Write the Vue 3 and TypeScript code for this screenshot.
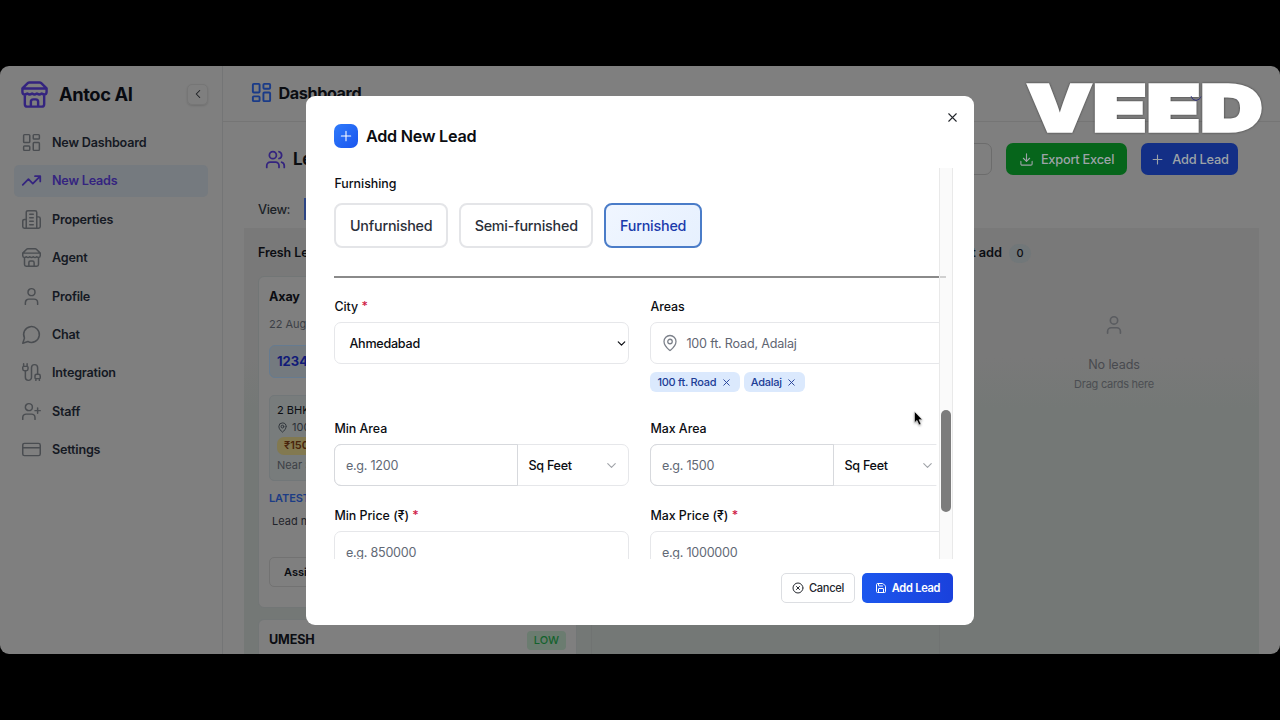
<script setup lang="ts">
import { h } from 'vue'

const shapes: Record<string, string> = {
  dashboard:
    'M4 3h5a1 1 0 0 1 1 1v7a1 1 0 0 1-1 1H4a1 1 0 0 1-1-1V4a1 1 0 0 1 1-1z M15 3h5a1 1 0 0 1 1 1v3a1 1 0 0 1-1 1h-5a1 1 0 0 1-1-1V4a1 1 0 0 1 1-1z M15 12h5a1 1 0 0 1 1 1v7a1 1 0 0 1-1 1h-5a1 1 0 0 1-1-1v-7a1 1 0 0 1 1-1z M4 16h5a1 1 0 0 1 1 1v3a1 1 0 0 1-1 1H4a1 1 0 0 1-1-1v-3a1 1 0 0 1 1-1z',
  trend: 'M22 7l-8.5 8.5-5-5L2 17 M16 7h6v6',
  building:
    'M6 22V4a2 2 0 0 1 2-2h8a2 2 0 0 1 2 2v18Z M6 12H4a2 2 0 0 0-2 2v6a2 2 0 0 0 2 2h2 M18 9h2a2 2 0 0 1 2 2v9a2 2 0 0 1-2 2h-2 M10 6h4 M10 10h4 M10 14h4 M10 18h4',
  store:
    'm2 7 4.41-4.41A2 2 0 0 1 7.83 2h8.34a2 2 0 0 1 1.42.59L22 7 M4 12v8a2 2 0 0 0 2 2h12a2 2 0 0 0 2-2v-8 M15 22v-4a2 2 0 0 0-2-2h-2a2 2 0 0 0-2 2v4 M2 7h20 M22 7v3a2 2 0 0 1-2 2a2.7 2.7 0 0 1-1.59-.63.7.7 0 0 0-.82 0A2.7 2.7 0 0 1 16 12a2.7 2.7 0 0 1-1.59-.63.7.7 0 0 0-.82 0A2.7 2.7 0 0 1 12 12a2.7 2.7 0 0 1-1.59-.63.7.7 0 0 0-.82 0A2.7 2.7 0 0 1 8 12a2.7 2.7 0 0 1-1.59-.63.7.7 0 0 0-.82 0A2.7 2.7 0 0 1 4 12a2 2 0 0 1-2-2V7',
  user: 'M19 21v-2a4 4 0 0 0-4-4H9a4 4 0 0 0-4 4v2 M16 7a4 4 0 1 1-8 0a4 4 0 1 1 8 0',
  chat: 'M7.9 20A9 9 0 1 0 4 16.1L2 22Z',
  cable:
    'M17 19a1 1 0 0 1-1-1v-2a2 2 0 0 1 2-2h2a2 2 0 0 1 2 2v2a1 1 0 0 1-1 1z M17 21v-2 M19 14V6.5a1 1 0 0 0-7 0v11a1 1 0 0 1-7 0V10 M21 21v-2 M3 5V2 M4 10a2 2 0 0 1-2-2V6a1 1 0 0 1 1-1h4a1 1 0 0 1 1 1v2a2 2 0 0 1-2 2z M7 5V2',
  userPlus:
    'M16 21v-2a4 4 0 0 0-4-4H6a4 4 0 0 0-4 4v2 M13 7a4 4 0 1 1-8 0a4 4 0 1 1 8 0 M19 8v6 M22 11h-6',
  card: 'M4 5h16a2 2 0 0 1 2 2v10a2 2 0 0 1-2 2H4a2 2 0 0 1-2-2V7a2 2 0 0 1 2-2z M2 10h20',
  users:
    'M16 21v-2a4 4 0 0 0-4-4H6a4 4 0 0 0-4 4v2 M13 7a4 4 0 1 1-8 0a4 4 0 1 1 8 0 M16 3.13a4 4 0 0 1 0 7.75 M22 21v-2a4 4 0 0 0-3-3.87',
  pin: 'M20 10c0 4.993-5.539 10.193-7.399 11.799a1 1 0 0 1-1.202 0C9.539 20.193 4 14.993 4 10a8 8 0 0 1 16 0 M15 10a3 3 0 1 1-6 0a3 3 0 1 1 6 0',
  download: 'M12 15V3 M21 15v4a2 2 0 0 1-2 2H5a2 2 0 0 1-2-2v-4 M7 10l5 5 5-5',
  plus: 'M5 12h14 M12 5v14',
  close: 'M18 6 6 18 M6 6l12 12',
  circleX: 'M22 12a10 10 0 1 1-20 0a10 10 0 1 1 20 0 M15 9l-6 6 M9 9l6 6',
  save: 'M15.2 3a2 2 0 0 1 1.4.6l3.8 3.8a2 2 0 0 1 .6 1.4V19a2 2 0 0 1-2 2H5a2 2 0 0 1-2-2V5a2 2 0 0 1 2-2z M17 21v-7a1 1 0 0 0-1-1H8a1 1 0 0 0-1 1v7 M7 3v4a1 1 0 0 0 1 1h7',
  left: 'M15 18l-6-6 6-6',
  down: 'M6 9l6 6 6-6',
}

interface IconProps {
  name: string
  size: number
  weight?: number
}

const Icon = (p: IconProps) =>
  h(
    'svg',
    {
      width: p.size,
      height: p.size,
      viewBox: '0 0 24 24',
      fill: 'none',
      stroke: 'currentColor',
      'stroke-width': p.weight ?? 2,
      'stroke-linecap': 'round',
      'stroke-linejoin': 'round',
    },
    [h('path', { d: shapes[p.name] })],
  )
Icon.props = ['name', 'size', 'weight']

const nav = [
  { label: 'New Dashboard', icon: 'dashboard' },
  { label: 'New Leads', icon: 'trend', active: true },
  { label: 'Properties', icon: 'building' },
  { label: 'Agent', icon: 'store' },
  { label: 'Profile', icon: 'user' },
  { label: 'Chat', icon: 'chat' },
  { label: 'Integration', icon: 'cable' },
  { label: 'Staff', icon: 'userPlus' },
  { label: 'Settings', icon: 'card' },
]

const furnishing = ['Unfurnished', 'Semi-furnished', 'Furnished']
const areas = ['100 ft. Road', 'Adalaj']
const sizes = [
  { label: 'Min Area', hint: 'e.g. 1200' },
  { label: 'Max Area', hint: 'e.g. 1500' },
]
const prices = [
  { label: 'Min Price (₹)', hint: 'e.g. 850000' },
  { label: 'Max Price (₹)', hint: 'e.g. 1000000' },
]
</script>

<template>
  <div class="stage">
    <div class="app">
      <aside class="sidebar">
        <div class="brand">
          <Icon class="brand-icon" name="store" :size="29" />
          <span class="brand-name">Antoc AI</span>
          <span class="collapse"><Icon name="left" :size="14" :weight="1.8" /></span>
        </div>
        <nav>
          <a v-for="item in nav" :key="item.label" class="nav-item" :class="{ active: item.active }">
            <Icon :name="item.icon" :size="21" :weight="item.active ? 2 : 1.7" />
            <span>{{ item.label }}</span>
          </a>
        </nav>
      </aside>

      <main class="main">
        <header class="topbar">
          <Icon name="dashboard" :size="23" />
          <span>Dashboard</span>
          <i class="ring"></i>
        </header>
        <div class="toolbar">
          <Icon class="leads-icon" name="users" :size="21" />
          <span class="leads-title">Leads</span>
          <span class="search"></span>
          <span class="btn green"><Icon name="download" :size="15" :weight="1.8" />Export Excel</span>
          <span class="btn blue"><Icon name="plus" :size="15" :weight="1.8" />Add Lead</span>
        </div>
        <div class="view-row"><span>View:</span><i></i></div>
        <div class="board">
          <section class="column">
            <div class="column-head">Fresh Leads</div>
            <article class="lead">
              <div class="lead-name">Axay</div>
              <div class="lead-date">22 Aug</div>
              <div class="phone">12345</div>
              <div class="need">
                <div class="need-type">2 BHK</div>
                <div class="need-place"><Icon name="pin" :size="11" />100</div>
                <div class="need-price">₹150</div>
                <div class="need-near">Near S</div>
              </div>
              <div class="latest">LATEST</div>
              <div class="note">Lead m</div>
              <div class="assign">Assign</div>
            </article>
            <article class="lead next">
              <div class="lead-name">UMESH</div>
              <span class="low">LOW</span>
            </article>
          </section>
          <section class="column"></section>
          <section class="column last">
            <div class="column-head">Not add <b>0</b></div>
            <div class="empty">
              <Icon name="user" :size="22" :weight="1.8" />
              <div class="empty-title">No leads</div>
              <div class="empty-sub">Drag cards here</div>
            </div>
          </section>
        </div>
      </main>
    </div>

    <div class="dialog">
      <div class="dialog-head">
        <span class="badge"><Icon name="plus" :size="16" :weight="1.6" /></span>
        <h2>Add New Lead</h2>
        <Icon class="dismiss" name="close" :size="15" :weight="1.7" />
      </div>

      <div class="scroller">
        <div class="form">
          <div class="label">Furnishing</div>
          <div class="choices">
            <span v-for="f in furnishing" :key="f" class="choice" :class="{ picked: f === 'Furnished' }">{{ f }}</span>
          </div>
          <div class="rule"></div>
          <div class="row places">
            <div>
              <div class="label">City <em>*</em></div>
              <div class="input city"><span>Ahmedabad</span><Icon name="down" :size="13" :weight="2.2" /></div>
            </div>
            <div>
              <div class="label">Areas</div>
              <div class="input area"><Icon name="pin" :size="18" :weight="1.7" /><span>100 ft. Road, Adalaj</span></div>
              <div class="chips">
                <span v-for="a in areas" :key="a" class="chip">{{ a }}<Icon name="close" :size="11" :weight="2" /></span>
              </div>
            </div>
          </div>
          <div class="row sizes">
            <div v-for="s in sizes" :key="s.label">
              <div class="label">{{ s.label }}</div>
              <div class="combo">
                <span class="amount">{{ s.hint }}</span>
                <span class="unit">Sq Feet<Icon name="down" :size="15" :weight="1.8" /></span>
              </div>
            </div>
          </div>
          <div class="row">
            <div v-for="p in prices" :key="p.label">
              <div class="label">{{ p.label }} <em>*</em></div>
              <div class="input price">{{ p.hint }}</div>
            </div>
          </div>
        </div>
        <div class="track"><div class="thumb"></div></div>
      </div>

      <div class="dialog-foot">
        <span class="cancel"><Icon name="circleX" :size="12" />Cancel</span>
        <span class="submit"><Icon name="save" :size="12" />Add Lead</span>
      </div>
    </div>

    <svg class="watermark" width="260" height="74" viewBox="0 0 260 74">
      <text y="61">
        <tspan x="13.5" textLength="64" lengthAdjust="spacingAndGlyphs">V</tspan><tspan x="79.3" textLength="53" lengthAdjust="spacingAndGlyphs">E</tspan><tspan x="133" textLength="53" lengthAdjust="spacingAndGlyphs">E</tspan><tspan x="186.7" textLength="61.5" lengthAdjust="spacingAndGlyphs">D</tspan>
      </text>
      <path d="M177 26q1 4 5 4.5q4-.5 5-4" fill="none" stroke="#26267c" stroke-width=".8" />
    </svg>

    <svg class="cursor" width="12" height="18" viewBox="0 0 12 18">
      <path d="M1.5 1.5v11.2l2.5-2.3 2 4.5 2-.9-2-4.3h3.4z" fill="#000" stroke="#fff" stroke-width=".5" />
    </svg>
  </div>
</template>

<style>
body {
  margin: 0;
  background: #000;
}
</style>

<style scoped>
.stage {
  position: relative;
  box-sizing: border-box;
  width: 1280px;
  height: 720px;
  padding: 66px 0;
  overflow: hidden;
  background: #000;
  font-family: Inter, "Liberation Sans", sans-serif;
  color: #0b0d12;
}
.stage * {
  box-sizing: border-box;
}
svg {
  flex: none;
}
.app {
  display: flex;
  height: 588px;
  overflow: hidden;
  border-radius: 9px;
  background: #7f7f7f;
}
.sidebar {
  width: 223px;
  flex: none;
  border-right: 1px solid #747576;
}
.brand {
  display: flex;
  align-items: center;
  height: 56px;
  padding: 0 14px 0 20px;
}
.brand-icon {
  color: #34247f;
}
.brand-name {
  margin-left: 10px;
  font-size: 18.3px;
  font-weight: 700;
  letter-spacing: -0.4px;
  color: #080a10;
}
.collapse {
  display: grid;
  place-items: center;
  width: 21px;
  height: 21px;
  margin-left: auto;
  border: 1px solid #767676;
  border-radius: 5px;
  box-shadow: 0 1px 2px #0002;
  color: #1c1e22;
}
nav {
  padding: 4.5px 14px 0;
}
.nav-item {
  display: flex;
  align-items: center;
  gap: 10px;
  height: 32.3px;
  margin: 0 0 6.05px;
  padding-left: 7px;
  border-radius: 5px;
  font-size: 12.6px;
  font-weight: 600;
  letter-spacing: -0.2px;
  color: #151923;
}
.nav-item svg {
  color: #4a4d51;
}
.nav-item.active,
.nav-item.active svg {
  color: #34247f;
}
.nav-item.active {
  background: #757a7f;
}
.main {
  flex: 1;
  min-width: 0;
}
.topbar {
  position: relative;
  display: flex;
  align-items: center;
  gap: 6px;
  height: 56px;
  padding: 0 0 1px 26.5px;
  border-bottom: 1px solid #757575;
  font-size: 16.2px;
  font-weight: 700;
  letter-spacing: -0.4px;
}
.topbar svg {
  margin-top: -2px;
  color: #1a3b88;
}
.ring {
  position: absolute;
  width: 11px;
  height: 11px;
  top: 23px;
  left: 1010px;
  border: 1px solid #26267c;
  border-radius: 50%;
}
.toolbar {
  display: flex;
  align-items: center;
  height: 74px;
  padding: 0 42px 0 42px;
}
.leads-icon {
  color: #34247f;
}
.leads-title {
  margin-left: 7px;
  font-size: 17px;
  font-weight: 700;
  letter-spacing: -0.3px;
}
.search {
  width: 120px;
  height: 32px;
  margin: 0 14px 0 auto;
  border: 1px solid #6c6c6c;
  border-radius: 7px;
}
.btn {
  display: flex;
  align-items: center;
  justify-content: center;
  gap: 7px;
  height: 32px;
  border-radius: 7px;
  font-size: 12.8px;
  font-weight: 500;
  letter-spacing: -0.24px;
  color: #9da3a8;
}
.green {
  width: 121px;
  margin-right: 14px;
  background: #06651b;
}
.blue {
  width: 97px;
  background: #132f86;
}
.view-row {
  display: flex;
  align-items: center;
  gap: 14px;
  height: 32px;
  padding: 0 0 6px 35px;
  font-size: 12.8px;
  font-weight: 500;
  letter-spacing: -0.4px;
  color: #1b1f27;
}
.view-row i {
  width: 60px;
  height: 22px;
  background: #2d4585;
}
.board {
  display: flex;
  width: 1015px;
  height: 426px;
  margin-left: 21px;
  overflow: hidden;
  background: linear-gradient(#797979 0 130px, #747876 180px);
}
.column {
  width: 348px;
  flex: none;
  padding: 14px 14px 0;
  border-right: 1px solid #707372;
}
.column.last {
  border: 0;
}
.column-head {
  height: 21px;
  line-height: 21px;
  font-size: 12.5px;
  font-weight: 600;
  letter-spacing: -0.1px;
}
.last .column-head {
  font-size: 12.8px;
}
.column-head b {
  display: inline-block;
  width: 22px;
  height: 19px;
  margin-left: 4px;
  border-radius: 10px;
  line-height: 19px;
  text-align: center;
  font-size: 11px;
  font-weight: 500;
  background: #717779;
}
.lead {
  height: 332px;
  margin-top: 13px;
  padding: 11px 10px 0;
  border: 1px solid #727676;
  border-radius: 6px;
  background: #7f7f7f;
}
.lead-name {
  height: 18px;
  line-height: 18px;
  font-size: 12.6px;
  font-weight: 700;
  letter-spacing: -0.15px;
}
.lead-date {
  margin-top: 9.5px;
  line-height: 16px;
  font-size: 11px;
  color: #3c4046;
}
.phone {
  height: 33px;
  margin-top: 13px;
  padding-left: 7px;
  border: 1px solid #667b90;
  border-radius: 6px;
  background: #747a7f;
  line-height: 31px;
  font-size: 13px;
  font-weight: 700;
  color: #111b78;
}
.need {
  height: 86px;
  margin-top: 17.5px;
  padding: 6px 7px;
  border: 1px solid #727779;
  border-radius: 5px;
  background: #787c7c;
  font-size: 11px;
  line-height: 17px;
}
.need-place {
  display: flex;
  align-items: center;
  gap: 4px;
  color: #2b3037;
}
.need-price {
  height: 18px;
  margin: 1px 0 2px;
  padding-left: 7px;
  border-radius: 7px;
  background: #827950;
  font-weight: 600;
  color: #49240b;
}
.need-near {
  color: #3c4046;
}
.latest {
  margin-top: 8.5px;
  line-height: 16px;
  font-size: 11px;
  font-weight: 600;
  letter-spacing: -0.1px;
  color: #1c3c85;
}
.note {
  margin: 7px 0 0 3px;
  line-height: 16px;
  font-size: 11px;
  color: #1f232a;
}
.assign {
  height: 30px;
  margin-top: 28.5px;
  padding-left: 14px;
  border: 1px solid #727272;
  border-radius: 5px;
  line-height: 28px;
  font-size: 11px;
  font-weight: 600;
}
.lead.next {
  display: flex;
  justify-content: space-between;
  height: 60px;
  margin-top: 11px;
}
.low {
  width: 39px;
  height: 19px;
  border-radius: 4px;
  background: #6b7c70;
  line-height: 19px;
  text-align: center;
  font-size: 11px;
  font-weight: 500;
  color: #14622d;
}
.empty {
  display: flex;
  flex-direction: column;
  align-items: center;
  padding-top: 51px;
  color: #5a5c60;
}
.empty-title {
  margin-top: 20px;
  line-height: 18px;
  font-size: 12.6px;
  letter-spacing: -0.1px;
  color: #484a4f;
}
.empty-sub {
  margin-top: 2px;
  line-height: 16px;
  font-size: 11px;
  letter-spacing: -0.25px;
  color: #4b4e52;
}
.dialog {
  position: absolute;
  left: 306px;
  top: 96px;
  width: 668px;
  height: 529px;
  padding: 0 21px 0 28.4px;
  border-radius: 9px;
  background: #fff;
}
.dialog-head {
  display: flex;
  align-items: center;
  height: 72px;
  padding: 8px 0 0;
}
.badge {
  display: grid;
  place-items: center;
  width: 24px;
  height: 24px;
  border-radius: 7px;
  background: linear-gradient(135deg, #2f7bfb, #1a55ee);
  color: #fff;
}
.dialog-head h2 {
  margin: 0 auto 0 7.6px;
  font-size: 16.2px;
  font-weight: 600;
  letter-spacing: -0.25px;
}
.dismiss {
  margin: -38px -7px 0 0;
  color: #23262c;
}
.scroller {
  display: flex;
  height: 391px;
  overflow: hidden;
}
.form {
  width: 604.6px;
  flex: none;
  padding-top: 8px;
  overflow: hidden;
}
.label {
  height: 16px;
  line-height: 16px;
  font-size: 12.4px;
  font-weight: 500;
  letter-spacing: -0.02px;
}
.label em {
  font-style: normal;
  color: #d01b48;
}
.choices {
  display: flex;
  gap: 11px;
  margin-top: 11px;
}
.choice {
  height: 45px;
  padding: 0 13.6px;
  border: 2px solid #e4e5e8;
  border-radius: 8px;
  line-height: 41px;
  font-size: 14.3px;
  font-weight: 450;
  letter-spacing: -0.2px;
  color: #2b303a;
}
.choice.picked {
  border-color: #4a7cc8;
  background: linear-gradient(135deg, #f0f6ff, #e6f0fe);
  color: #1a3aab;
}
.rule {
  height: 2px;
  margin: 28px 0 21px;
  background: #8a8a8a;
}
.row {
  display: grid;
  grid-template-columns: 295px 295px;
  gap: 21px;
}
.places {
  height: 93px;
  margin-bottom: 29px;
}
.sizes {
  margin-bottom: 22px;
}
.input,
.combo {
  display: flex;
  align-items: center;
  height: 42px;
  margin-top: 7px;
  border: 1px solid #e6e7ea;
  border-radius: 7px;
  font-size: 12.6px;
  letter-spacing: -0.26px;
}
.city {
  justify-content: space-between;
  padding: 0 0 0 14px;
  font-weight: 500;
}
.area {
  gap: 7px;
  padding-left: 10px;
  letter-spacing: -0.2px;
  color: #5f6673;
}
.area svg {
  color: #7c818a;
}
.chips {
  display: flex;
  gap: 4px;
  margin-top: 8px;
}
.chip {
  display: flex;
  align-items: center;
  gap: 4.5px;
  height: 20px;
  padding: 0 8px 0 7px;
  border-radius: 6px;
  background: #dbe9fd;
  font-size: 11px;
  font-weight: 500;
  letter-spacing: -0.27px;
  color: #203c96;
}
.combo {
  color: #626976;
}
.row > :last-child .combo {
  clip-path: inset(0 9px 0 -1px);
}
.amount {
  display: flex;
  align-items: center;
  width: 184px;
  height: 42px;
  margin-left: -1px;
  padding-left: 10.5px;
  border: 1px solid #d7d9dd;
  border-radius: 7px 0 0 7px;
}
.unit {
  display: flex;
  flex: 1;
  align-items: center;
  justify-content: space-between;
  padding: 0 9.5px 0 10px;
  font-weight: 500;
  color: #0b0d12;
}
.unit svg {
  color: #a0a3a8;
}
.price {
  padding-left: 10.5px;
  color: #626976;
}
.track {
  width: 14px;
  flex: none;
  padding: 242px 2px 0 1px;
  border: solid #e9e9e9;
  border-width: 0 1px;
  background: linear-gradient(#d0d0d0, #d0d0d0) 0 108px / 6px 2px no-repeat, #fafafa;
}
.thumb {
  width: 10px;
  height: 102px;
  border-radius: 5px;
  background: #7c7c7c;
}
.dialog-foot {
  display: flex;
  justify-content: flex-end;
  gap: 7px;
  padding-top: 14px;
  font-size: 11.1px;
  font-weight: 500;
  letter-spacing: -0.28px;
}
.cancel,
.submit {
  display: flex;
  align-items: center;
  justify-content: center;
  gap: 5px;
  height: 30px;
  border-radius: 5px;
}
.cancel {
  width: 74px;
  border: 1px solid #dcdee2;
  color: #24272e;
}
.submit {
  width: 91px;
  background: linear-gradient(90deg, #1c57ee, #1a41dc);
  font-weight: 600;
  color: #fff;
}
.watermark {
  position: absolute;
  left: 1014px;
  top: 70px;
}
.watermark text {
  font: 900 63.5px Inter, sans-serif;
  fill: #fff;
  stroke: #fff;
  stroke-width: 3.6px;
  filter: drop-shadow(0 0 1px #0008);
}
.cursor {
  position: absolute;
  left: 913px;
  top: 410px;
  filter: drop-shadow(0 1px 1px #0005);
}
</style>
